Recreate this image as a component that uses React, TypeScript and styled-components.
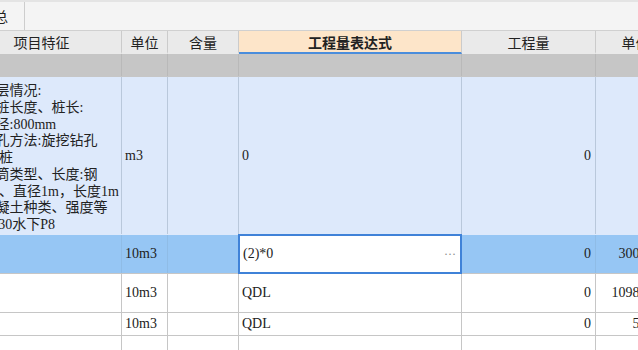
import React from "react";
import styled, { createGlobalStyle } from "styled-components";

const COLS = "160px 46px 71px 223px 134px 80px";

const GlobalStyle = createGlobalStyle`
  html, body { margin: 0; padding: 0; background: #fff; overflow: hidden; }
  * { box-sizing: border-box; }
`;

const Page = styled.div`
  width: 638px;
  height: 350px;
  overflow: hidden;
  background: #fff;
  font-family: "Liberation Serif", "Noto Sans CJK SC", serif;
  font-size: 14px;
  color: #222;
`;

const Toolbar = styled.div`
  height: 31px;
  display: flex;
  background: #f4f4f4;
  border-top: 2px solid #e4e4e4;
  border-bottom: 1px solid #d0d0d0;
`;

const Tab = styled.div`
  width: 25px;
  display: flex;
  justify-content: flex-end;
  align-items: center;
  padding-right: 16px;
  overflow: hidden;
  white-space: nowrap;
  border-right: 1px solid #cdcdcd;
  font-family: "Noto Sans CJK SC", sans-serif;
  font-size: 14px;
  color: #222;
`;

const Viewport = styled.div`
  overflow: hidden;
`;

// the sheet is scrolled a little to the right, so its first column starts off-screen
const Sheet = styled.div`
  width: 714px;
  margin-left: -38px;
`;

const Row = styled.div<{ $h: number; $bg: string; $line: string }>`
  display: grid;
  grid-template-columns: ${COLS};
  height: ${(p) => p.$h}px;
  background: ${(p) => p.$bg};
  border-bottom: 1px solid ${(p) => p.$line};
`;

const HeadRow = styled.div`
  display: grid;
  grid-template-columns: ${COLS};
  height: 23px;
  background: #eaeaea;
`;

const HeadCell = styled.div<{ $active?: boolean }>`
  display: flex;
  align-items: center;
  justify-content: center;
  border-right: 1px solid #cbcbcb;
  font-family: "Noto Sans CJK SC", sans-serif;
  font-size: 14px;
  font-weight: ${(p) => (p.$active ? 700 : 400)};
  color: #222;
  background: ${(p) => (p.$active ? "#fde5c9" : "transparent")};
  border-bottom: 2px solid ${(p) => (p.$active ? "#4a8ddc" : "transparent")};
`;

const Cell = styled.div<{ $align?: "left" | "right"; $top?: boolean; $line: string; $pad?: number }>`
  display: flex;
  align-items: ${(p) => (p.$top ? "flex-start" : "center")};
  justify-content: ${(p) => (p.$align === "right" ? "flex-end" : "flex-start")};
  padding: 0 ${(p) => (p.$align === "right" ? 4 : 0)}px 0 ${(p) => p.$pad ?? 3}px;
  border-right: 1px solid ${(p) => p.$line};
  white-space: nowrap;
  overflow: hidden;
`;

const Lines = styled.div`
  padding-top: 6px;
  line-height: 16.75px;
  white-space: pre;
`;

const EditCell = styled.div`
  display: flex;
  align-items: center;
  justify-content: space-between;
  padding: 0 4px 0 3px;
  background: #fff;
  border: 2px solid #3f82d8;
  margin: -1px 0 -1px -1px;
`;

const More = styled.span`
  color: #888;
  font-size: 12px;
`;

const features = [
  "1.地层情况:",
  "2.空桩长度、桩长:",
  "3.桩径:800mm",
  "4.成孔方法:旋挖钻孔",
  "灌注桩",
  "5.护筒类型、长度:钢",
  "护筒、直径1m，长度1m",
  "6.混凝土种类、强度等",
  "级:C30水下P8",
];

const rows = [
  { h: 39, unit: "10m3", expr: "QDL", qty: "0", price: "109874.12" },
  { h: 23, unit: "10m3", expr: "QDL", qty: "0", price: "512.30" },
  { h: 23, unit: "", expr: "", qty: "", price: "" },
];

export default function App() {
  const blueLine = "#b9c8db";
  const selLine = "#8fbce6";
  const grid = "#c6c6c6";
  return (
    <Page>
      <GlobalStyle />
      <Toolbar>
        <Tab>汇总</Tab>
      </Toolbar>
      <Viewport>
        <Sheet>
          <HeadRow>
            <HeadCell>项目特征</HeadCell>
            <HeadCell>单位</HeadCell>
            <HeadCell>含量</HeadCell>
            <HeadCell $active>工程量表达式</HeadCell>
            <HeadCell>工程量</HeadCell>
            <HeadCell>单价</HeadCell>
          </HeadRow>

          <Row $h={23} $bg="#c6c6c6" $line="#c6c6c6">
            {Array.from({ length: 6 }).map((_, i) => (
              <Cell key={i} $line="#b9b9b9" />
            ))}
          </Row>

          <Row $h={158} $bg="#dde9fb" $line="#dde9fb">
            <Cell $top $pad={9} $line={blueLine}>
              <Lines>{features.join("\n")}</Lines>
            </Cell>
            <Cell $line={blueLine}>m3</Cell>
            <Cell $line={blueLine} />
            <Cell $line={blueLine}>0</Cell>
            <Cell $align="right" $line={blueLine}>0</Cell>
            <Cell $align="right" $line={blueLine} />
          </Row>

          <Row $h={39} $bg="#96c6f4" $line="#c6c6c6">
            <Cell $line={selLine} />
            <Cell $line={selLine}>10m3</Cell>
            <Cell $line={selLine} />
            <EditCell>
              <span>(2)*0</span>
              <More>···</More>
            </EditCell>
            <Cell $align="right" $line={selLine}>0</Cell>
            <Cell $align="right" $line={selLine}>30012.55</Cell>
          </Row>

          {rows.map((r, i) => (
            <Row key={i} $h={r.h} $bg="#fff" $line={grid}>
              <Cell $line={grid} />
              <Cell $line={grid}>{r.unit}</Cell>
              <Cell $line={grid} />
              <Cell $line={grid}>{r.expr}</Cell>
              <Cell $align="right" $line={grid}>{r.qty}</Cell>
              <Cell $align="right" $line={grid}>{r.price}</Cell>
            </Row>
          ))}
        </Sheet>
      </Viewport>
    </Page>
  );
}
